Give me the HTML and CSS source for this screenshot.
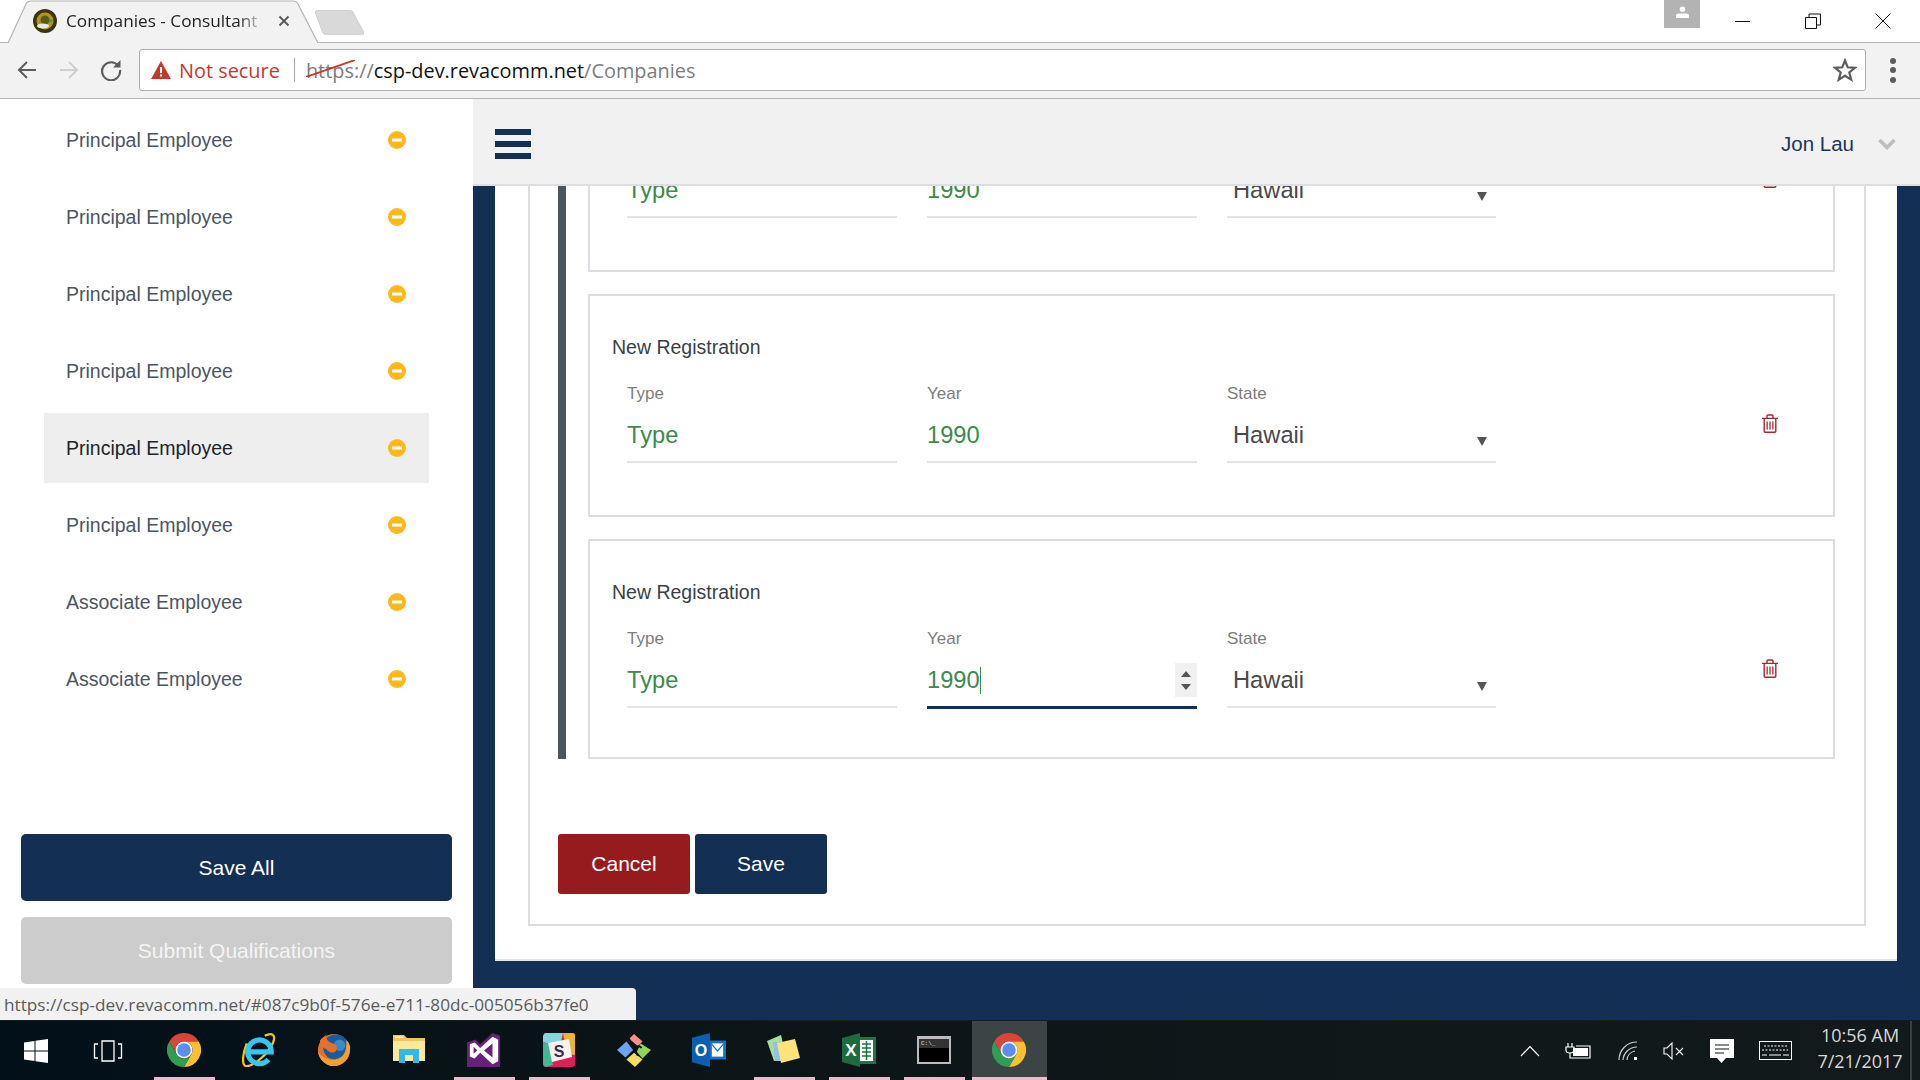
FILE: index.html
```html
<!DOCTYPE html>
<html lang="en">
<head>
<meta charset="utf-8">
<title>Companies - Consultant</title>
<link rel="stylesheet" href="styles.css">
</head>
<body>
<svg class="defs" aria-hidden="true">
  <symbol id="chrome" viewBox="0 0 48 48">
    <path fill="#db4437" d="M3.2 12A24 24 0 0 1 44.8 12H24A12 12 0 0 0 13.6 30Z"/>
    <path fill="#fbc02d" d="M44.8 12A24 24 0 0 1 24 48L34.4 30A12 12 0 0 0 24 12Z"/>
    <path fill="#2f9e52" d="M24 48A24 24 0 0 1 3.2 12L13.6 30A12 12 0 0 0 34.4 30Z"/>
    <circle cx="24" cy="24" r="12" fill="#f4f4f4"/>
    <circle cx="24" cy="24" r="9.5" fill="#5c8df0"/>
  </symbol>
  <symbol id="trash" viewBox="0 0 16 19">
    <path fill="none" stroke="#a3282e" stroke-width="1.4" d="M0 4.4H16M2.2 4.4V17.2Q2.2 18.2 3.2 18.2H12.8Q13.8 18.2 13.8 17.2V4.4M5 4.2V2Q5 1 6 1H10Q11 1 11 2V4.2"/>
    <path fill="none" stroke="#a3282e" stroke-width="1.6" stroke-opacity=".8" d="M5.2 7.4V15.4M8 7.4V15.4M10.8 7.4V15.4"/>
  </symbol>
  <symbol id="minus" viewBox="0 0 18 18">
    <circle cx="9" cy="9" r="9" fill="#ffb81c"/>
    <rect x="4" y="7.5" width="10" height="3" fill="#fff"/>
  </symbol>
</svg>

<header class="tabstrip">
  <div class="tab">
    <svg class="tab-shape" viewBox="0 0 330 44"><path fill="#f2f2f2" stroke="#b4b4b4" stroke-width="1.2" d="M8 43L26 4Q27 1 31 1H293Q297 1 298 4L318 43"/></svg>
    <svg class="favicon" viewBox="0 0 24 24">
      <circle cx="12" cy="12" r="12" fill="#3a3413"/>
      <circle cx="12" cy="12" r="8.5" fill="#b4961f"/>
      <circle cx="12" cy="11" r="4.5" fill="#5d5a1c"/>
      <ellipse cx="10" cy="17" rx="6" ry="2.4" fill="#e8e8e8"/>
      <circle cx="18" cy="12" r="1.4" fill="#3f9a4a"/>
    </svg>
    <span class="tab-title">Companies - Consultant</span>
    <svg class="tab-close" viewBox="0 0 12 12"><path fill="none" stroke="#555" stroke-width="1.8" d="M1.5 1.5L10.5 10.5M10.5 1.5L1.5 10.5"/></svg>
  </div>
  <svg class="newtab" viewBox="0 0 50 25"><path fill="#d9d9d9" stroke="#cfcfcf" d="M3 .5H36Q38 .5 39 3L49 22Q50 24.500 47 24.500H12Q9 24.500 8 22L1 3Q0 .5 3 .5Z"/></svg>
  <div class="winctl">
    <div class="avatar">
      <svg viewBox="0 0 14 14" class="avatar-icon"><circle cx="7" cy="3.500" r="3" fill="#fff"/><path fill="#fff" d="M0 13V10Q0 8 3 8H11Q14 8 14 10V13Z"/></svg>
    </div>
    <div class="capbtn"><svg viewBox="0 0 16 16" class="capicon"><path stroke="#111" stroke-width="1" d="M0 8.500H15"/></svg></div>
    <div class="capbtn"><svg viewBox="0 0 16 16" class="capicon"><path fill="none" stroke="#111" d="M.5 4.500H11.500V15.500H.5ZM4 4.500V1H15.500V12H11.500"/></svg></div>
    <div class="capbtn"><svg viewBox="0 0 16 16" class="capicon"><path stroke="#111" d="M.5 .5L15.500 15.500M15.500 .5L.5 15.500"/></svg></div>
  </div>
</header>

<nav class="toolbar">
  <svg class="navicon" viewBox="0 0 22 22"><path fill="none" stroke="#5c5c5c" stroke-width="2" d="M20 11H3M11 3L3 11L11 19"/></svg>
  <svg class="navicon" viewBox="0 0 22 22"><path fill="none" stroke="#cfcfcf" stroke-width="2" d="M2 11H19M11 3L19 11L11 19"/></svg>
  <svg class="navicon" viewBox="0 0 22 22"><path fill="none" stroke="#5c5c5c" stroke-width="2.200" d="M18 6.500A9 9 0 1 0 20 11"/><path fill="#5c5c5c" d="M13 8.500H20.500V1Z"/></svg>
  <div class="omnibox">
    <svg class="warn" viewBox="0 0 20 18"><path fill="#c5392b" d="M10 0L20 18H0Z"/><rect x="9" y="6" width="2" height="6" fill="#fff"/><rect x="9" y="13.500" width="2" height="2" fill="#fff"/></svg>
    <span class="notsecure">Not secure</span>
    <span class="sep"></span>
    <span class="url"><span class="scheme">https<svg class="strike" viewBox="0 0 49 17"><path stroke="#c5392b" stroke-width="1.800" d="M0 17L49 0"/></svg></span><span class="dim">://</span>csp-dev.revacomm.net<span class="dim">/Companies</span></span>
    <svg class="star" viewBox="0 0 24 24"><path fill="none" stroke="#5c5c5c" stroke-width="2.200" d="M12 2.500L14.700 9.300L22 9.800L16.300 14.500L18.200 21.600L12 17.700L5.800 21.600L7.700 14.500L2 9.800L9.300 9.300Z"/></svg>
  </div>
  <div class="dots"><i></i><i></i><i></i></div>
</nav>

<main class="main">
  <aside class="sidebar">
    <ul class="emp-list">
      <li class="emp"><span>Principal Employee</span><svg class="minus"><use href="#minus"/></svg></li>
      <li class="emp"><span>Principal Employee</span><svg class="minus"><use href="#minus"/></svg></li>
      <li class="emp"><span>Principal Employee</span><svg class="minus"><use href="#minus"/></svg></li>
      <li class="emp"><span>Principal Employee</span><svg class="minus"><use href="#minus"/></svg></li>
      <li class="emp selected"><span>Principal Employee</span><svg class="minus"><use href="#minus"/></svg></li>
      <li class="emp"><span>Principal Employee</span><svg class="minus"><use href="#minus"/></svg></li>
      <li class="emp"><span>Associate Employee</span><svg class="minus"><use href="#minus"/></svg></li>
      <li class="emp"><span>Associate Employee</span><svg class="minus"><use href="#minus"/></svg></li>
    </ul>
    <div class="side-actions">
      <button class="sidebtn primary">Save All</button>
      <button class="sidebtn disabled">Submit Qualifications</button>
    </div>
  </aside>

  <section class="content">
    <div class="topbar">
      <div class="burger"><i></i><i></i><i></i></div>
      <span class="user">Jon Lau</span>
      <svg class="chev" viewBox="0 0 18 12"><path fill="none" stroke="#bdbdbd" stroke-width="3.600" d="M1.500 2L9 9.500L16.500 2"/></svg>
    </div>
    <div class="scroller">
      <div class="panel">
        <div class="box">
          <div class="group">
            <div class="card">
              <div class="card-title">New Registration</div>
              <div class="fields">
                <div class="field"><label>Type</label><div class="value green">Type</div></div>
                <div class="field"><label>Year</label><div class="value green">1990</div></div>
                <div class="field"><label>State</label><div class="value select">Hawaii<i class="caret-down"></i></div></div>
                <svg class="trash"><use href="#trash"/></svg>
              </div>
            </div>
            <div class="card">
              <div class="card-title">New Registration</div>
              <div class="fields">
                <div class="field"><label>Type</label><div class="value green">Type</div></div>
                <div class="field"><label>Year</label><div class="value green">1990</div></div>
                <div class="field"><label>State</label><div class="value select">Hawaii<i class="caret-down"></i></div></div>
                <svg class="trash"><use href="#trash"/></svg>
              </div>
            </div>
            <div class="card last">
              <div class="card-title">New Registration</div>
              <div class="fields">
                <div class="field"><label>Type</label><div class="value green">Type</div></div>
                <div class="field"><label>Year</label><div class="value green focus"><span class="typed">1990</span><div class="spin"><i class="up"></i><i class="down"></i></div></div></div>
                <div class="field"><label>State</label><div class="value select">Hawaii<i class="caret-down"></i></div></div>
                <svg class="trash"><use href="#trash"/></svg>
              </div>
            </div>
          </div>
          <div class="actions">
            <button class="btn cancel">Cancel</button>
            <button class="btn save">Save</button>
          </div>
        </div>
      </div>
    </div>
  </section>
  <div class="status">https://csp-dev.revacomm.net/#087c9b0f-576e-e711-80dc-005056b37fe0</div>
</main>

<footer class="taskbar">
  <div class="tb-start"><svg class="tb-win" viewBox="0 0 24 24"><path fill="#fff" d="M0 3.500L10.500 2V11.500H0ZM11.500 1.800L24 0V11.500H11.500ZM0 12.500H10.500V22L0 20.500ZM11.500 12.500H24V24L11.500 22.200Z"/></svg></div>
  <div class="tb-view"><svg class="tb-taskview" viewBox="0 0 30 22"><path fill="none" stroke="#fff" stroke-width="1.300" d="M9 1H21V21H9ZM5 4H1.500V18H5M25 4H28.500V18H25"/></svg></div>
  <div class="tb-item on"><svg class="tb-icon"><use href="#chrome"/></svg></div>
  <div class="tb-item">
    <svg class="tb-icon" viewBox="0 0 36 36">
      <path fill="none" stroke="#f4c21f" stroke-width="2.400" d="M5 11C0 24 0 34 4 35C10 36 27 24 33 10C36 2 32 -1 24 3"/>
      <path fill="none" stroke="#39c3ee" stroke-width="5.500" d="M7 20H31A12.500 12.500 0 1 0 28 28"/>
    </svg>
  </div>
  <div class="tb-item">
    <svg class="tb-icon" viewBox="0 0 36 36">
      <circle cx="18" cy="18" r="17" fill="#e5702a"/>
      <circle cx="20" cy="15" r="13.500" fill="#1c5a9e"/>
      <circle cx="24" cy="13" r="6" fill="#3b8ac4"/>
      <path fill="#f0a030" d="M35 14C36 24 29 35 18 35C10 35 3 29 1 20C6 26 12 29 19 28C27 27 32 21 31 8C33 9 34 11 35 14Z"/>
      <path fill="#e5702a" d="M3 8C5 5 8 3 10 2C9 6 11 9 17 11C21 12 22 16 20 19C17 22 12 21 10 17C7 17 4 14 3 8Z"/>
    </svg>
  </div>
  <div class="tb-item">
    <svg class="tb-icon" viewBox="0 0 34 34">
      <path fill="#f0c75e" d="M1 2H12L15 5H33V28H1Z"/>
      <path fill="#ffe89a" d="M1 8H33V28H1Z"/>
      <rect x="3" y="3.500" width="8" height="1.200" fill="#fff"/>
      <path fill="#2fb8ea" d="M7 30V16H27V30H21V22H13V30Z"/>
    </svg>
  </div>
  <div class="tb-item on">
    <svg class="tb-icon" viewBox="0 0 36 36">
      <path fill="#68217a" d="M0 10L9 7L14 12L27 0L35 3V36H0Z"/>
      <path fill="#fff" fill-rule="evenodd" d="M3 12L8 10L14 16L27 4L33 7V30L27 33L14 21L8 27L3 25ZM7 14.500V22L11 18.500ZM18 18.500L27 26V11Z"/>
    </svg>
  </div>
  <div class="tb-item on">
    <svg class="tb-icon" viewBox="0 0 32 34">
      <rect width="32" height="34" rx="3" fill="#e01e5a"/>
      <path fill="#89d3df" d="M2 0H20L17 13L0 9V3Z"/>
      <path fill="#ecb32e" d="M20 0H30Q32 0 32 3V22L24 21L20 0Z"/>
      <path fill="#3eb991" d="M0 9L6 11L10 32L3 34Q0 33 0 30Z"/>
      <path fill="#f3f3f3" d="M5 10L26 6L29 24L9 29Z"/>
      <text x="16" y="24" class="tb-s">S</text>
    </svg>
  </div>
  <div class="tb-item">
    <svg class="tb-icon" viewBox="0 0 36 36">
      <path fill="#fa8e88" d="M13 6L18 1L27 9L22 14Z"/>
      <path fill="#6ea3f5" d="M0 18L10 9L17 18L9 26Z"/>
      <path fill="#8ed55e" d="M25 11L36 18L27 27L21 20Z"/>
      <path fill="#f7dd5c" d="M10 28L18 21L27 28L19 36Z"/>
      <path fill="none" stroke="#0e1416" stroke-width="2" d="M12 5L22 24M26 16A4 4 0 1 0 19 20"/>
    </svg>
  </div>
  <div class="tb-item">
    <svg class="tb-icon" viewBox="0 0 36 36">
      <rect x="18" y="8" width="18" height="20" fill="#1272c7"/>
      <path fill="#fff" d="M21 11H33V25H21Z"/>
      <path fill="#1272c7" d="M21 11L27 18L33 11V13L27 20L21 13Z"/>
      <path fill="#0a5fb0" d="M0 5L19 0V36L0 31Z"/>
      <text x="9.500" y="24" class="tb-o">O</text>
    </svg>
  </div>
  <div class="tb-item on">
    <svg class="tb-icon" viewBox="0 0 34 34">
      <path fill="#a9dca1" d="M0 8L14 2L19 24L7 28Z"/>
      <path fill="#8fc0e8" d="M6 9H20V28H8Z"/>
      <path fill="#ffe27a" d="M10 10L28 6L33 25L14 30Z"/>
    </svg>
  </div>
  <div class="tb-item on">
    <svg class="tb-icon" viewBox="0 0 34 34">
      <rect x="17" y="4" width="17" height="27" fill="#fff"/>
      <path fill="#237346" d="M18 4H34V31H18V28H31V7H18Z"/>
      <path stroke="#237346" stroke-width="1.500" d="M20 11H29M20 15H29M20 19H29M20 23H29M24.500 8V27"/>
      <path fill="#1e6b40" d="M0 5L18 0V34L0 29Z"/>
      <text x="9" y="23" class="tb-x">X</text>
    </svg>
  </div>
  <div class="tb-item on">
    <svg class="tb-icon" viewBox="0 0 34 30">
      <rect width="34" height="28" y="1" fill="#bcbcbc"/>
      <rect x="2" y="4" width="30" height="23" fill="#000"/>
      <rect x="2" y="4" width="30" height="9" fill="#333"/>
      <text x="4" y="10" class="tb-c">C:\_</text>
    </svg>
  </div>
  <div class="tb-item on active"><svg class="tb-icon"><use href="#chrome"/></svg></div>

  <div class="tray">
    <svg class="tray-caret" viewBox="0 0 20 12"><path fill="none" stroke="#fff" stroke-width="1.200" d="M1 11L10 1.500L19 11"/></svg>
    <svg class="tray-batt" viewBox="0 0 26 18"><path fill="none" stroke="#fff" stroke-width="1.200" d="M3 1V5M7 1V5M1 5H9V8Q9 11 5 11Q1 11 1 8ZM5 11V16H25V4H11"/><rect x="8" y="6" width="15" height="8" fill="#fff"/></svg>
    <svg class="tray-wifi" viewBox="0 0 20 20"><path fill="none" stroke="#cfcfcf" stroke-width="1.200" d="M1 19A18 18 0 0 1 19 1M5 19A14 14 0 0 1 19 6M9 19A10 10 0 0 1 17 10"/><rect x="16" y="16" width="3" height="3" fill="#fff"/></svg>
    <svg class="tray-vol" viewBox="0 0 22 18"><path fill="none" stroke="#fff" stroke-width="1.100" d="M1 6V12H4L9 17V1L4 6ZM13 6L20 13M20 6L13 13"/></svg>
    <svg class="tray-note" viewBox="0 0 24 24"><path fill="#fff" d="M0 0H24V19H16L11.500 24L7 19H0Z"/><path stroke="#0e1618" stroke-width="1.200" d="M5 6H19M5 10H19M5 14H14"/></svg>
    <svg class="tray-kb" viewBox="0 0 33 19"><rect x=".5" y=".5" width="32" height="18" fill="none" stroke="#fff"/><path stroke="#fff" stroke-dasharray="2 1.500" d="M5 5H29M3 9H29"/><path stroke="#fff" d="M3 14H8M10 14H22M24 14H30"/></svg>
    <div class="clock"><span>10:56 AM</span><span>7/21/2017</span></div>
    <div class="showdesk"></div>
  </div>
</footer>
</body>
</html>
```

FILE: styles.css
```css
* { box-sizing: border-box; }
html, body { margin: 0; height: 100%; }
body {
  display: flex;
  flex-direction: column;
  height: 1080px;
  overflow: hidden;
  background: #fff;
  font-family: "Liberation Sans", Arial, sans-serif;
}
.defs { position: absolute; width: 0; height: 0; }

/* browser chrome */
.tabstrip {
  position: relative;
  display: flex;
  align-items: flex-start;
  height: 43px;
  flex: none;
  background: #fff;
  border-bottom: 1px solid #b4b4b4;
  font-family: "Open Sans", sans-serif;
}
.tab {
  position: relative;
  display: flex;
  align-items: center;
  width: 314px;
  height: 43px;
  padding: 0 0 2px 33px;
}
.tab-shape { position: absolute; left: 0; top: 0; width: 330px; height: 44px; }
.favicon { position: relative; width: 24px; height: 24px; flex: none; }
.tab-title {
  position: relative;
  width: 195px;
  margin-left: 9px;
  white-space: nowrap;
  font-size: 17.200px;
  color: #222;
  -webkit-mask-image: linear-gradient(90deg, #000 88%, rgba(0, 0, 0, .3) 98%);
  mask-image: linear-gradient(90deg, #000 88%, rgba(0, 0, 0, .3) 98%);
}
.tab-close { position: relative; width: 12px; height: 12px; margin-left: 17px; }
.newtab { width: 51px; height: 25px; margin: 10px 0 0 0; position: relative; }
.winctl { display: flex; margin-left: auto; padding-right: 2px; }
.avatar {
  display: flex;
  justify-content: center;
  width: 36px;
  height: 28px;
  margin-right: 8px;
  background: #b3b3b3;
}
.avatar-icon { width: 13px; height: 13px; margin-top: 6px; }
.capbtn { display: flex; justify-content: center; width: 70px; padding-top: 13px; }
.capicon { width: 16px; height: 16px; }

.toolbar {
  display: flex;
  align-items: center;
  flex: none;
  height: 56px;
  padding: 0 0 1px 16px;
  background: #f2f2f2;
  border-bottom: 1px solid #b4b4b4;
  font-family: "Open Sans", sans-serif;
}
.navicon { width: 22px; height: 22px; margin-right: 20px; flex: none; }
.omnibox {
  display: flex;
  align-items: center;
  width: 1727px;
  height: 42px;
  margin-left: -3px;
  padding-left: 11px;
  background: #fff;
  border: 1px solid #aeaeae;
  border-radius: 3px;
  font-size: 19.900px;
  white-space: nowrap;
}
.warn { width: 20px; height: 18px; flex: none; }
.notsecure { margin-left: 8px; color: #c5392b; }
.sep { width: 1px; height: 24px; margin: 0 11px 0 14px; background: #a8a8a8; }
.url { color: #111; }
.scheme { position: relative; color: #7c7c7c; }
.dim { color: #7c7c7c; }
.strike { position: absolute; left: 0; top: 3px; width: 49px; height: 17px; }
.star { width: 24px; height: 24px; margin-left: auto; margin-right: 8px; }
.dots { display: flex; flex-direction: column; gap: 3.500px; margin-left: 24px; }
.dots i { width: 6px; height: 6px; border-radius: 50%; background: #5c5c5c; }

/* main */
.main { position: relative; display: flex; flex: 1; min-height: 0; }
.sidebar {
  display: flex;
  flex-direction: column;
  width: 473px;
  flex: none;
  padding-top: 6px;
  background: #fff;
}
.emp-list {
  display: flex;
  flex-direction: column;
  gap: 7px;
  margin: 0 0 0 44px;
  padding: 0;
  width: 385px;
  list-style: none;
}
.emp {
  display: flex;
  align-items: center;
  justify-content: space-between;
  height: 70px;
  padding: 0 23px 0 22px;
  font-size: 19.500px;
  color: #4c5562;
}
.emp.selected { background: #eeeeee; color: #20242a; }
.minus { width: 18px; height: 18px; }
.side-actions {
  display: flex;
  flex-direction: column;
  gap: 16px;
  margin: auto 21px 36px;
}
.sidebtn {
  height: 67px;
  border: 0;
  border-radius: 5px;
  font: 21px "Liberation Sans", Arial, sans-serif;
  color: #fff;
}
.sidebtn.primary { background: #132f53; }
.sidebtn.disabled { background: #cccccc; color: #f4f4f4; padding-top: 2px; }

.content { display: flex; flex-direction: column; flex: 1; min-width: 0; background: #132f53; }
.topbar {
  display: flex;
  align-items: center;
  flex: none;
  height: 87px;
  padding: 4px 24px 0 22px;
  background: #f1f1f1;
  border-bottom: 2px solid #dcdfe4;
}
.burger { display: flex; flex-direction: column; gap: 6px; }
.burger i { width: 36px; height: 6px; background: #132f53; }
.user { margin-left: auto; font-size: 20.500px; color: #1d3556; }
.chev { width: 18px; height: 12px; margin-left: 24px; }

.scroller { display: flex; flex: 1; min-height: 0; padding: 0 23px 59px 22px; }
.panel {
  display: flex;
  flex-direction: column;
  justify-content: flex-end;
  flex: 1;
  overflow: hidden;
  padding: 0 31px 33px 33px;
  background: #fff;
  border-bottom: 2px solid #e6e6ea;
}
.box {
  flex: none;
  padding: 0 29px 30px 28px;
  border: 2px solid #dcdce2;
  border-top: 0;
}
.group { padding-left: 22px; border-left: 8px solid #4a5560; display: flex; flex-direction: column; gap: 22px; }
.card { padding: 39px 0 52px 22px; border: 2px solid #dcdce2; }
.card.last { padding-bottom: 48px; }
.card-title { font-size: 19.500px; line-height: 24px; color: #3a3f47; }
.fields { display: flex; gap: 30px; margin: 25px 0 0 15px; position: relative; }
.field { width: 270px; }
.field:nth-child(3) { width: 269px; }
.field label { display: block; font-size: 17px; line-height: 20px; color: #7d7d7d; }
.value {
  position: relative;
  height: 45px;
  margin-top: 14px;
  padding-bottom: 9px;
  font-size: 23.700px;
  line-height: 34px;
  color: #4a4a4a;
  border-bottom: 2px solid #e4e4e6;
}
.value.green { color: #3d8a4c; }
.value.select { padding-left: 6px; }
.caret-down {
  position: absolute;
  right: 9px;
  top: 19px;
  border-left: 5px solid transparent;
  border-right: 5px solid transparent;
  border-top: 9px solid #555;
}
.value.focus { height: 46px; border-bottom: 3px solid #132f53; }
.typed { display: inline-block; height: 27px; line-height: 27px; margin-top: 3px; border-right: 1px solid #3d8a4c; }
.spin {
  position: absolute;
  right: 0;
  top: 0;
  display: flex;
  flex-direction: column;
  align-items: center;
  justify-content: center;
  gap: 7px;
  width: 22px;
  height: 34px;
  background: #f0f0f0;
}
.spin i { border-left: 5px solid transparent; border-right: 5px solid transparent; }
.spin .up { border-bottom: 6px solid #555; }
.spin .down { border-top: 6px solid #555; }
.trash { width: 16px; height: 19px; margin: 30px 55px 0 auto; flex: none; }

.actions { display: flex; gap: 5px; margin-top: 75px; }
.btn {
  width: 132px;
  height: 60px;
  border: 0;
  border-radius: 3px;
  font: 21px "Liberation Sans", Arial, sans-serif;
  color: #fff;
}
.btn.cancel { background: #961b1e; }
.btn.save { background: #132f53; }

.status {
  position: absolute;
  left: 0;
  bottom: 0;
  width: 636px;
  height: 32px;
  padding-left: 4px;
  background: #f1f1f1;
  border-top-right-radius: 4px;
  font: 17.200px/33px "Open Sans", sans-serif;
  white-space: nowrap;
  color: #5a5a5a;
}

/* taskbar */
.taskbar {
  display: flex;
  align-items: stretch;
  flex: none;
  height: 60px;
  background: linear-gradient(90deg, #02101a, #0b1416 35%, #121a1c);
  border-top: 1px solid #1a1a1a;
  font-family: "Open Sans", sans-serif;
}
.tb-start { display: flex; align-items: center; justify-content: center; width: 72px; }
.tb-win { width: 24px; height: 24px; }
.tb-view { display: flex; align-items: center; justify-content: center; width: 75px; padding-right: 3px; }
.tb-taskview { width: 30px; height: 22px; }
.tb-item { position: relative; display: flex; align-items: center; justify-content: center; width: 75px; padding: 0 2px 2px 0; }
.tb-icon { width: 34px; height: 34px; }
.tb-item.on::after {
  content: "";
  position: absolute;
  left: 7px;
  right: 7px;
  bottom: 0;
  height: 3px;
  background: #f7b5cc;
}
.tb-item.active { background: #3c4446; }
.tb-item.active::after { left: 0; right: 0; }
.tb-s { font: 700 16px "Liberation Sans", sans-serif; fill: #3f2a4a; text-anchor: middle; }
.tb-o { font: 700 17px "Liberation Sans", sans-serif; fill: #fff; text-anchor: middle; }
.tb-x { font: 700 17px "Liberation Sans", sans-serif; fill: #fff; text-anchor: middle; }
.tb-c { font: 6px "Liberation Mono", monospace; fill: #ddd; }
.tray { display: flex; align-items: center; margin-left: auto; position: relative; height: 100%; }
.tray-caret { width: 20px; height: 12px; margin-right: 25px; }
.tray-batt { width: 26px; height: 18px; margin-right: 27px; }
.tray-wifi { width: 20px; height: 20px; margin-right: 25px; }
.tray-vol { width: 22px; height: 18px; margin-right: 25px; }
.tray-note { width: 24px; height: 24px; margin-right: 25px; }
.tray-kb { width: 33px; height: 19px; margin-right: 26px; }
.clock {
  display: flex;
  flex-direction: column;
  align-items: center;
  width: 84px;
  padding-bottom: 5px;
  font-size: 18px;
  line-height: 26px;
  color: #d8d8d8;
}
.showdesk { width: 2px; height: 100%; margin: 0 8px 0 8px; background: #3a3f42; }
```
